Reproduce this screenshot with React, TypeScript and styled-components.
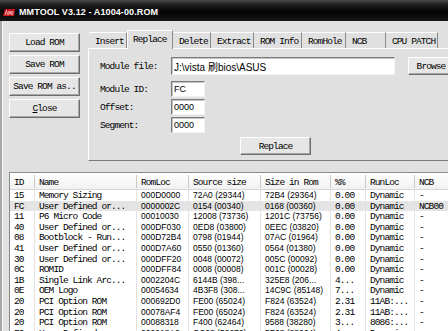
import React from "react";
import styled, { createGlobalStyle } from "styled-components";

const MONO = `"Liberation Mono", "Courier New", monospace`;
const SANS = `"Liberation Sans", Arial, "Noto Sans CJK SC", sans-serif`;
const FACE = "#e0e0e0";

const Global = createGlobalStyle`
  html, body { margin: 0; padding: 0; width: 448px; height: 331px; overflow: hidden; background: ${FACE}; }
  #root { width: 448px; height: 331px; overflow: hidden; }
`;

const Window = styled.div`
  width: 490px;
  height: 331px;
  display: flex;
  flex-direction: column;
  background: ${FACE};
  color: #000;
`;

const TitleBar = styled.div`
  height: 21px;
  flex: none;
  display: flex;
  align-items: center;
  gap: 3px;
  padding: 3px 0 0 2px;
  box-sizing: border-box;
  background: linear-gradient(to bottom, #4a4a4a 0%, #1e1e1e 22%, #050505 55%, #161616 100%);
`;

const Title = styled.span`
  font: bold 9px ${SANS};
  color: #fff;
  letter-spacing: 0.1px;
`;

const Body = styled.div`
  flex: 1;
  min-height: 0;
  display: flex;
  flex-direction: column;
  border-left: 2px solid #a9a9a9;
  box-shadow: inset 1px 0 #f4f4f4;
  padding-left: 7px;
`;

const TopArea = styled.div`
  display: flex;
  padding-top: 9px;
`;

const ButtonColumn = styled.div`
  width: 71px;
  flex: none;
  margin-top: 3px;
  display: flex;
  flex-direction: column;
  gap: 3px;
`;

const Button = styled.div<{ $w?: number; $h?: number; $ml?: number; $mt?: number }>`
  width: ${(p) => p.$w ?? 71}px;
  height: ${(p) => p.$h ?? 19}px;
  margin-left: ${(p) => p.$ml ?? 0}px;
  margin-top: ${(p) => p.$mt ?? 0}px;
  flex: none;
  box-sizing: border-box;
  display: flex;
  align-items: center;
  justify-content: center;
  background: #e6e6e6;
  border: 1px solid;
  border-color: #fdfdfd #6e6e6e #6e6e6e #fdfdfd;
  box-shadow: inset -1px -1px #a6a6a6;
  font: 9.5px ${MONO};
  letter-spacing: -0.9px;
  white-space: nowrap;
`;

const TabControl = styled.div`
  flex: 1;
  margin-left: 8px;
  display: flex;
  flex-direction: column;
`;

const TabStrip = styled.div`
  height: 18px;
  display: flex;
  align-items: flex-end;
  padding-left: 1px;
`;

const Tab = styled.div<{ $w: number; $active?: boolean }>`
  width: ${(p) => p.$w}px;
  height: ${(p) => (p.$active ? 19 : 16)}px;
  margin-bottom: ${(p) => (p.$active ? -1 : 0)}px;
  position: relative;
  z-index: ${(p) => (p.$active ? 2 : 1)};
  box-sizing: border-box;
  flex: none;
  display: flex;
  align-items: center;
  padding: ${(p) => (p.$active ? "0 0 2px 5px" : "2px 0 0 5px")};
  background: ${FACE};
  border-top: 1px solid #fff;
  border-left: 1px solid ${(p) => (p.$active ? "#fff" : "transparent")};
  border-right: 1px solid #8a8a8a;
  font: 9.5px ${MONO};
  letter-spacing: -0.9px;
  white-space: nowrap;
`;

const TabPanel = styled.div`
  height: 113px;
  box-sizing: border-box;
  border-top: 1px solid #fff;
  border-left: 1px solid #fff;
  border-bottom: 1px solid #7a7a7a;
  padding: 8px 0 0 11px;
  display: flex;
  flex-direction: column;
`;

const FieldRow = styled.div<{ $h: number; $mt: number }>`
  height: ${(p) => p.$h}px;
  margin-top: ${(p) => p.$mt}px;
  display: flex;
  align-items: center;
`;

const Label = styled.span`
  width: 71px;
  flex: none;
  font: 9.5px ${MONO};
  letter-spacing: -0.9px;
  padding-top: 1px;
`;

const TextInput = styled.div<{ $w: number; $big?: boolean }>`
  width: ${(p) => p.$w}px;
  height: 100%;
  flex: none;
  box-sizing: border-box;
  background: #fff;
  border: 1px solid;
  border-color: #7c7c7c #f4f4f4 #f4f4f4 #7c7c7c;
  box-shadow: inset 1px 1px #c4c4c4;
  display: flex;
  align-items: center;
  padding-left: 2px;
  font: ${(p) => (p.$big ? 10 : 9)}px ${SANS};
  white-space: nowrap;
`;

const ListView = styled.div`
  margin-top: 11px;
  flex: 1;
  background: #fff;
  border-top: 1px solid #8a8a8a;
  border-left: 1px solid #8a8a8a;
  overflow: hidden;
`;

const HeaderRow = styled.div`
  height: 17px;
  display: flex;
  background: linear-gradient(to bottom, #ffffff, #f1f1f1);
  border-bottom: 1px solid #d6d6d6;
  box-sizing: border-box;
`;

const HeaderCell = styled.div<{ $w: number }>`
  width: ${(p) => p.$w}px;
  flex: none;
  box-sizing: border-box;
  border-right: 1px solid #c9c9c9;
  margin: 2px 0 1px;
  padding: 2px 0 0 4px;
  display: flex;
  align-items: center;
  font: 9.5px ${MONO};
  letter-spacing: -0.9px;
  white-space: nowrap;
`;

const Row = styled.div<{ $sel?: boolean }>`
  height: 10.6px;
  display: flex;
  background: ${(p) => (p.$sel ? "#e4e4e4" : "#fff")};
`;

const Cell = styled.div<{ $w: number; $sans?: boolean }>`
  width: ${(p) => p.$w}px;
  flex: none;
  box-sizing: border-box;
  border-right: 1px solid #e2e2e2;
  padding-left: 4px;
  line-height: 10.6px;
  overflow: hidden;
  white-space: nowrap;
  font: ${(p) => (p.$sans ? `8.5px ${SANS}` : `9.5px ${MONO}`)};
  letter-spacing: ${(p) => (p.$sans ? "0" : "-0.9px")};
`;

const AppIcon = () => (
  <svg width="14" height="9" viewBox="0 0 14 9">
    <path d="M1 8 L3 1 L13 1 L12 8 Z" fill="#c8141a" />
    <path d="M3 7 L4.5 2.5 L5.5 7 M6.5 7 L7 3 L8.2 6 L9.2 3 L9.4 7 M10.6 7 L11 3" stroke="#f3c0c0" strokeWidth="0.8" fill="none" />
  </svg>
);

const tabs: { label: string; w: number }[] = [
  { label: "Insert", w: 38 },
  { label: "Replace", w: 46 },
  { label: "Delete", w: 38 },
  { label: "Extract", w: 43 },
  { label: "ROM Info", w: 48 },
  { label: "RomHole", w: 44 },
  { label: "NCB", w: 40 },
  { label: "CPU PATCH", w: 52 },
];

const columns: { title: string; w: number; sans?: boolean }[] = [
  { title: "ID", w: 25 },
  { title: "Name", w: 102 },
  { title: "RomLoc", w: 52, sans: true },
  { title: "Source size", w: 72, sans: true },
  { title: "Size in Rom", w: 70, sans: true },
  { title: "%%", w: 35 },
  { title: "RunLoc", w: 49 },
  { title: "NCB", w: 80 },
];

const rows: string[][] = [
  ["15", "Memory Sizing", "000D0000", "72A0 (29344)", "72B4 (29364)", "0.00", "Dynamic", "-"],
  ["FC", "User Defined or...", "0000002C", "0154 (00340)", "0168 (00360)", "0.00", "Dynamic", "NCB00"],
  ["11", "P6 Micro Code", "00010030", "12008 (73736)", "1201C (73756)", "0.00", "Dynamic", "-"],
  ["40", "User Defined or...", "000DF030", "0ED8 (03800)", "0EEC (03820)", "0.00", "Dynamic", "-"],
  ["08", "Bootblock - Run...", "000D72B4", "0798 (01944)", "07AC (01964)", "0.00", "Dynamic", "-"],
  ["41", "User Defined or...", "000D7A60", "0550 (01360)", "0564 (01380)", "0.00", "Dynamic", "-"],
  ["30", "User Defined or...", "000DFF20", "0048 (00072)", "005C (00092)", "0.00", "Dynamic", "-"],
  ["0C", "ROMID", "000DFF84", "0008 (00008)", "001C (00028)", "0.00", "Dynamic", "-"],
  ["1B", "Single Link Arc...", "0002204C", "6144B (398...", "325E8 (206...", "4...", "Dynamic", "-"],
  ["0E", "OEM Logo", "00054634", "4B3F8 (308...", "14C9C (85148)", "7...", "Dynamic", "-"],
  ["20", "PCI Option ROM", "000692D0", "FE00 (65024)", "F824 (63524)", "2.31", "11AB:...", "-"],
  ["20", "PCI Option ROM", "00078AF4", "FE00 (65024)", "F824 (63524)", "2.31", "11AB:...", "-"],
  ["20", "PCI Option ROM", "00088318", "F400 (62464)", "9588 (38280)", "3...", "8086:...", "-"],
  ["F0", "User Defined or...", "000918A0", "CC08 (52276)", "5F68 (28264)", "4...", "Dynamic", "-"],
];

export default function App() {
  return (
    <>
      <Global />
      <Window>
        <TitleBar>
          <AppIcon />
          <Title>MMTOOL V3.12 - A1004-00.ROM</Title>
        </TitleBar>
        <Body>
          <TopArea>
            <ButtonColumn>
              <Button>Load ROM</Button>
              <Button>Save ROM</Button>
              <Button>Save ROM as..</Button>
              <Button>
                <u>C</u>lose
              </Button>
            </ButtonColumn>
            <TabControl>
              <TabStrip>
                {tabs.map((t) => (
                  <Tab key={t.label} $w={t.w} $active={t.label === "Replace"}>
                    {t.label}
                  </Tab>
                ))}
              </TabStrip>
              <TabPanel>
                <FieldRow $h={18} $mt={0}>
                  <Label>Module file:</Label>
                  <TextInput $w={224} $big>J:\vista 刷bios\ASUS</TextInput>
                  <Button $w={46} $h={18} $ml={13}>Browse</Button>
                </FieldRow>
                <FieldRow $h={16} $mt={6}>
                  <Label>Module ID:</Label>
                  <TextInput $w={34}>FC</TextInput>
                </FieldRow>
                <FieldRow $h={16} $mt={2}>
                  <Label>Offset:</Label>
                  <TextInput $w={34}>0000</TextInput>
                </FieldRow>
                <FieldRow $h={16} $mt={2}>
                  <Label>Segment:</Label>
                  <TextInput $w={34}>0000</TextInput>
                </FieldRow>
                <Button $w={71} $h={18} $ml={140} $mt={4}>Replace</Button>
              </TabPanel>
            </TabControl>
          </TopArea>
          <ListView>
            <HeaderRow>
              {columns.map((c) => (
                <HeaderCell key={c.title} $w={c.w}>{c.title}</HeaderCell>
              ))}
            </HeaderRow>
            {rows.map((r, i) => (
              <Row key={i} $sel={r[0] === "FC"}>
                {r.map((v, j) => (
                  <Cell key={j} $w={columns[j].w} $sans={columns[j].sans}>{v}</Cell>
                ))}
              </Row>
            ))}
          </ListView>
        </Body>
      </Window>
    </>
  );
}
